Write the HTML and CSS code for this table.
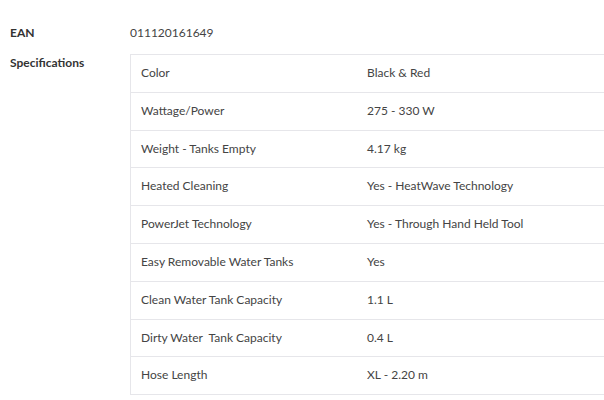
FILE: index.html
```html
<!DOCTYPE html>
<html lang="en">
<head>
  <meta charset="UTF-8" />
  <meta name="viewport" content="width=device-width, initial-scale=1.0"/>
  <title>Product Details</title>
  <link rel="stylesheet" href="styles.css">
</head>
<body>
  <div class="details">
    <div class="detail-row">
      <div class="detail-label">EAN</div>
      <div class="detail-value">011120161649</div>
    </div>
    <div class="detail-row">
      <div class="detail-label">Specifications</div>
      <div class="detail-value">
        <table class="spec-table">
          <tbody>
            <tr><td>Color</td><td>Black &amp; Red</td></tr>
            <tr><td>Wattage/Power</td><td>275 - 330 W</td></tr>
            <tr><td>Weight - Tanks Empty</td><td>4.17 kg</td></tr>
            <tr><td>Heated Cleaning</td><td>Yes - HeatWave Technology</td></tr>
            <tr><td>PowerJet Technology</td><td>Yes - Through Hand Held Tool</td></tr>
            <tr><td>Easy Removable Water Tanks</td><td>Yes</td></tr>
            <tr><td>Clean Water Tank Capacity</td><td>1.1 L</td></tr>
            <tr><td>Dirty Water&nbsp; Tank Capacity</td><td>0.4 L</td></tr>
            <tr><td>Hose Length</td><td>XL - 2.20 m</td></tr>
          </tbody>
        </table>
      </div>
    </div>
  </div>
</body>
</html>
```

FILE: styles.css
```css
body {
  margin: 0;
  font-family: Lato, "Open Sans", sans-serif;
  font-size: 12px;
  color: #444;
  background: #fff;
  overflow: hidden;
}
.details {
  padding: 24px 0 0 10px;
  display: flex;
  flex-direction: column;
  gap: 12px;
}
.detail-row {
  display: flex;
  line-height: 18px;
}
.detail-label {
  width: 120px;
  flex-shrink: 0;
  font-weight: bold;
  color: #333;
}
.detail-value {
  flex-shrink: 0;
}
.spec-table {
  width: 520px;
  border-collapse: collapse;
}
.spec-table td {
  padding: 10px;
  line-height: 16.8px;
  border: 1px solid #e6e6ea;
  border-left: none;
  border-right: none;
  text-align: left;
}
.spec-table td:first-child {
  width: 206px;
  border-left: 1px solid #e6e6ea;
}
```
